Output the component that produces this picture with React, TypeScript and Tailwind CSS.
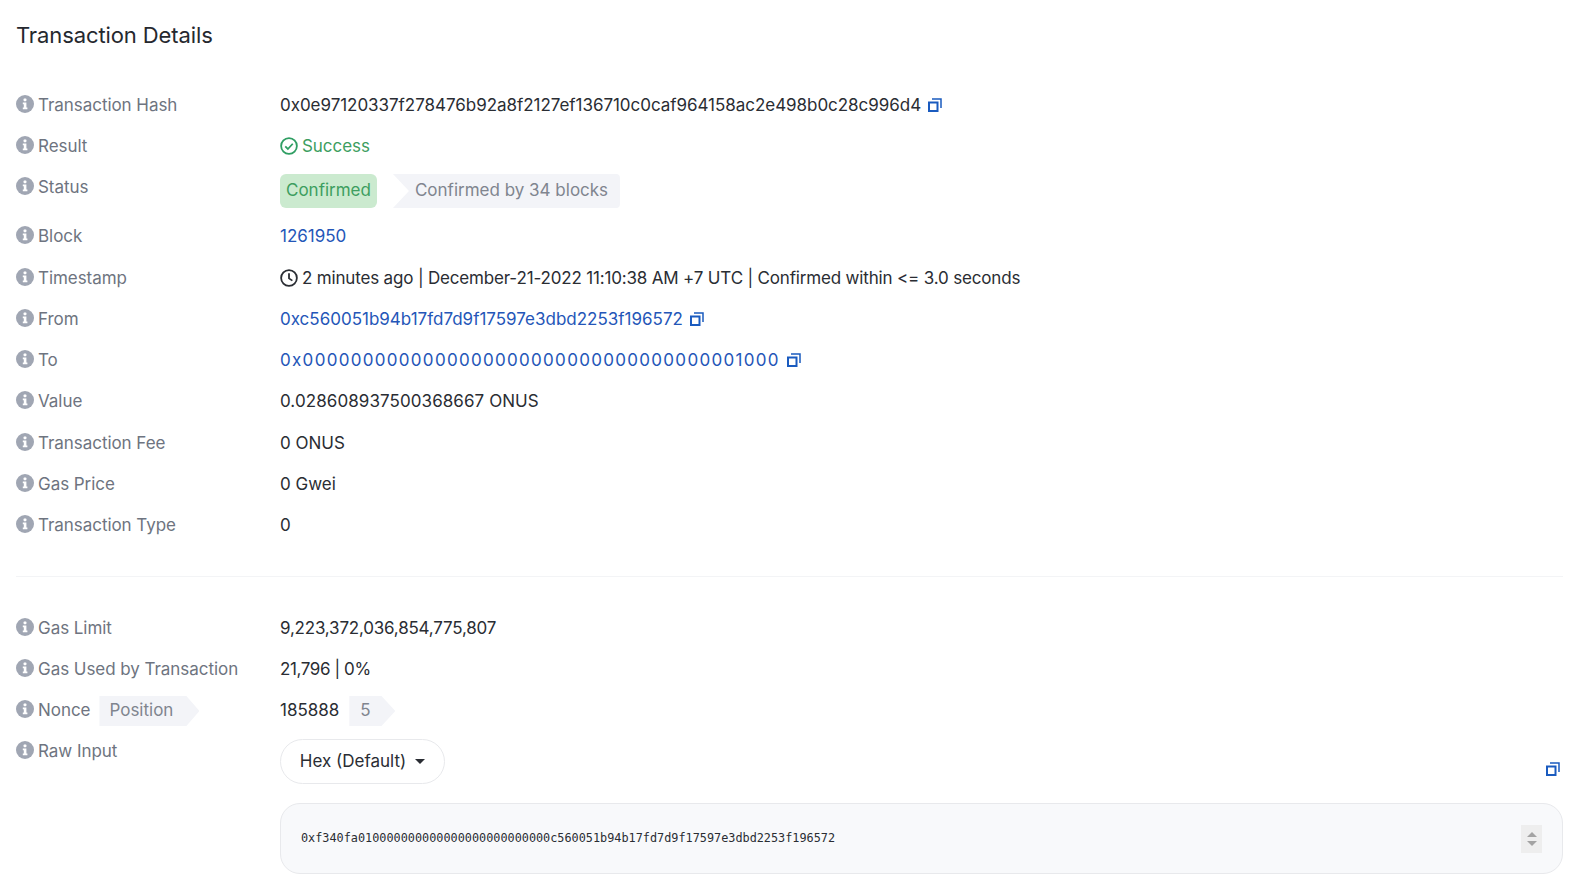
import React from 'react';

function InfoIcon() {
  return (
    <svg viewBox="0 0 18 18" className="w-[18px] h-[18px] shrink-0">
      <circle cx="9" cy="9" r="9" fill="#a0a6b3" />
      <rect x="7.6" y="3.6" width="2.8" height="2.6" rx="0.6" fill="#fff" />
      <path d="M6.8 7.6h3.6v5h1v1.6H6.8v-1.6h1v-3.4h-1z" fill="#fff" />
    </svg>
  );
}

function CopyIcon() {
  return (
    <svg viewBox="0 0 14 14" className="w-[14px] h-[14px] shrink-0" fill="none" stroke="#1a5bbf" strokeWidth="2">
      <rect x="1" y="4.5" width="8.5" height="8.5" />
      <path d="M4 1h9v9" strokeWidth="1.5" />
    </svg>
  );
}

function Row({ label, children, extra, className = 'h-[41px]' }: { label: string; children: React.ReactNode; extra?: React.ReactNode; className?: string }) {
  return (
    <div className={`flex ${className}`}>
      <div className="w-[264px] shrink-0 flex items-start pt-[8px] gap-[4px] text-[#6e7480]">
        <InfoIcon />
        <span className="leading-[20px] tracking-[-0.05px]">{label}</span>
        {extra}
      </div>
      <div className="flex-1 min-w-0 text-[#2a2d33]">{children}</div>
    </div>
  );
}

function Val({ children, className = 'gap-[7px]' }: { children: React.ReactNode; className?: string }) {
  return <div className={`flex items-center h-[20px] mt-[8px] leading-[20px] ${className}`}>{children}</div>;
}

export default function App() {
  return (
    <div className="min-h-[889px] bg-white pl-[16px] pr-[17px] pt-[20px] text-[17px] font-['Inter',sans-serif] overflow-hidden">
      <h1 className="text-[22px] leading-[30px] tracking-[-0.1px] text-[#25282e] mb-[37px]">Transaction Details</h1>

      <Row label="Transaction Hash">
        <Val>
          <span className="tracking-[-0.04px]">0x0e97120337f278476b92a8f2127ef136710c0caf964158ac2e498b0c28c996d4</span>
          <CopyIcon />
        </Val>
      </Row>
      <Row label="Result">
        <Val className="text-[#3d9e5f] gap-[4px]">
          <svg viewBox="0 0 24 24" className="w-[18px] h-[18px]" fill="none" stroke="#2f9e63" strokeWidth="2.4">
            <circle cx="12" cy="12" r="10.5" />
            <path d="M7 12.5l3.5 3.5 6.5-7" />
          </svg>
          <span className="tracking-[-0.05px]">Success</span>
        </Val>
      </Row>
      <Row label="Status" className="h-[49px]">
        <div className="flex items-center h-[34px] mt-[5px]">
          <span className="h-[34px] px-[6px] rounded-[6px] bg-[#cbeacf] text-[#3d9e5f] flex items-center">Confirmed</span>
          <span className="ml-[16px] h-[34px] w-[227px] pl-[22px] rounded-r-[4px] bg-[#f3f4f8] text-[#80858f] flex items-center [clip-path:polygon(0_0,100%_0,100%_100%,0_100%,16px_50%)]">
            Confirmed by 34 blocks
          </span>
        </div>
      </Row>
      <Row label="Block" className="h-[42px]">
        <Val className="text-[#2456b8]">1261950</Val>
      </Row>
      <Row label="Timestamp">
        <Val className="gap-[4px]">
          <svg viewBox="0 0 24 24" className="w-[18px] h-[18px]" fill="none" stroke="#2a2d33" strokeWidth="2.4">
            <circle cx="12" cy="12" r="10.5" />
            <path d="M12 5.5v7l4.5 3" />
          </svg>
          <span className="tracking-[-0.17px]">2 minutes ago | December-21-2022 11:10:38 AM +7 UTC | Confirmed within &lt;= 3.0 seconds</span>
        </Val>
      </Row>
      <Row label="From">
        <Val className="text-[#2456b8] gap-[7px]">
          <span className="tracking-[0px]">0xc560051b94b17fd7d9f17597e3dbd2253f196572</span>
          <CopyIcon />
        </Val>
      </Row>
      <Row label="To">
        <Val className="text-[#2456b8] gap-[7px]">
          <span className="tracking-[1.3px]">0x0000000000000000000000000000000000001000</span>
          <CopyIcon />
        </Val>
      </Row>
      <Row label="Value" className="h-[42px]">
        <Val className="tracking-[0.08px]">0.028608937500368667 ONUS</Val>
      </Row>
      <Row label="Transaction Fee">
        <Val>0 ONUS</Val>
      </Row>
      <Row label="Gas Price">
        <Val>0 Gwei</Val>
      </Row>
      <Row label="Transaction Type">
        <Val>0</Val>
      </Row>

      <div className="h-px bg-[#f3f4f6] mt-[28px] mb-[33px]" />

      <Row label="Gas Limit">
        <Val className="tracking-[-0.2px]">9,223,372,036,854,775,807</Val>
      </Row>
      <Row label="Gas Used by Transaction">
        <Val className="tracking-[-0.4px]">21,796 | 0%</Val>
      </Row>
      <Row
        label="Nonce"
        extra={
          <span className="ml-[5px] -mt-[4px] h-[30px] w-[100px] pl-[10px] bg-[#f3f4f8] text-[#80858f] flex items-center [clip-path:polygon(0_0,87%_0,100%_50%,87%_100%,0_100%)]">
            Position
          </span>
        }
      >
        <div className="flex items-center h-[30px] mt-[4px]">
          <span>185888</span>
          <span className="ml-[10px] h-[30px] w-[46px] pl-[11px] bg-[#f3f4f8] text-[#80858f] flex items-center [clip-path:polygon(0_0,70%_0,100%_50%,70%_100%,0_100%)]">5</span>
        </div>
      </Row>
      <Row label="Raw Input" className="h-[131px]">
        <div className="flex items-start justify-between">
          <div className="mt-[6px] h-[45px] w-[165px] rounded-full border border-[#e8e9ec] flex items-center justify-center gap-[9px] text-[#2a2d33]">
            <span>Hex (Default)</span>
            <span className="w-0 h-0 border-x-[5px] border-x-transparent border-t-[5px] border-t-[#2a2d33]" />
          </div>
          <div className="mt-[29px] mr-[3px]"><CopyIcon /></div>
        </div>
        <div className="mt-[19px] h-[71px] rounded-[20px] border border-[#e8e9ec] bg-[#f8f9fb] flex items-center justify-between pl-[20px] pr-[20px]">
          <span className="font-['DejaVu_Sans_Mono',monospace] text-[11.83px] text-[#2a2d33]">0xf340fa010000000000000000000000000c560051b94b17fd7d9f17597e3dbd2253f196572</span>
          <div className="w-[21px] h-[28px] bg-[#eeeeee] flex flex-col items-center justify-center gap-[4px]">
            <span className="w-0 h-0 border-x-[5px] border-x-transparent border-b-[5px] border-b-[#a3a3a3]" />
            <span className="w-0 h-0 border-x-[5px] border-x-transparent border-t-[5px] border-t-[#a3a3a3]" />
          </div>
        </div>
      </Row>
    </div>
  );
}
